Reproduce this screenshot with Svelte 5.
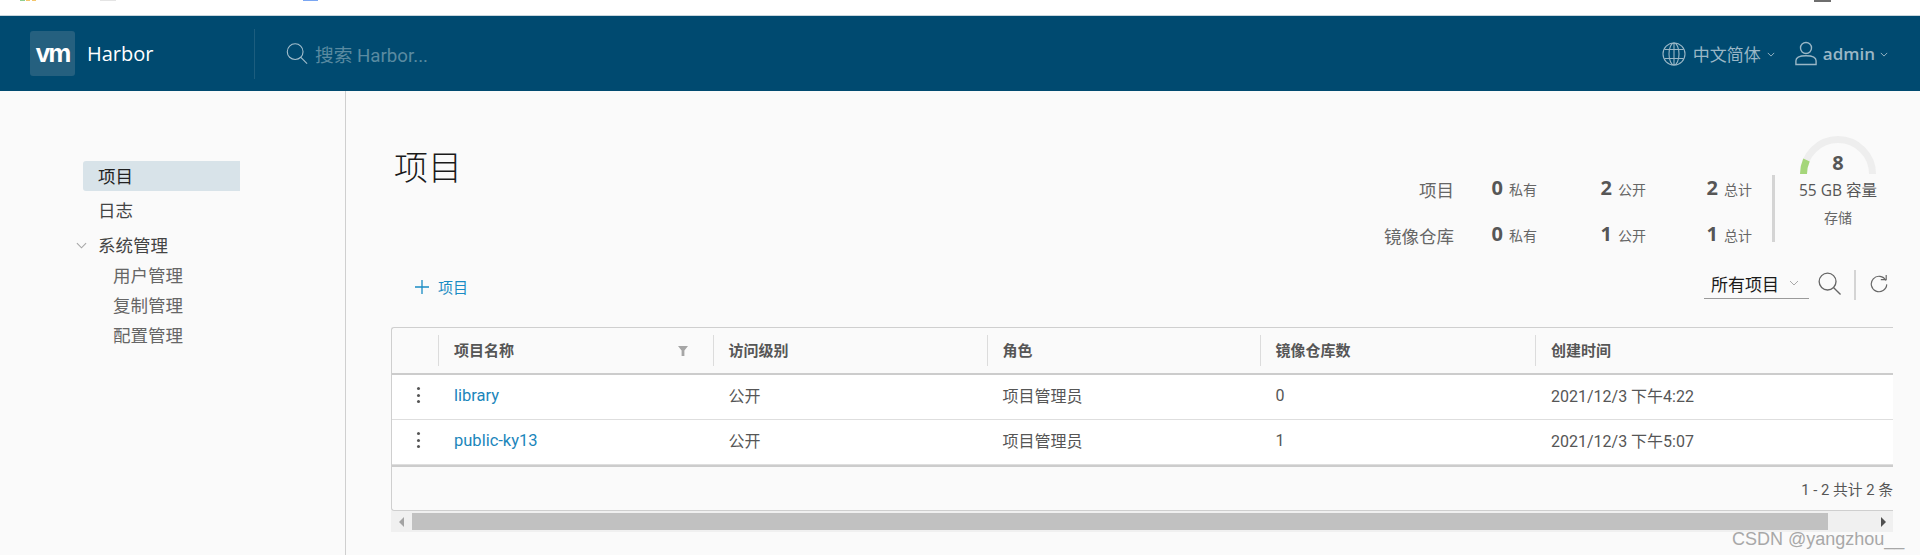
<script lang="ts">
	const rows = [
		{ name: 'library', access: '公开', role: '项目管理员', repos: 0, created: '2021/12/3 下午4:22' },
		{ name: 'public-ky13', access: '公开', role: '项目管理员', repos: 1, created: '2021/12/3 下午5:07' }
	];
	const columns = ['项目名称', '访问级别', '角色', '镜像仓库数', '创建时间'];
	const stats = [
		{ label: '项目', priv: 0, pub: 2, total: 2 },
		{ label: '镜像仓库', priv: 0, pub: 1, total: 1 }
	];
</script>

<div class="page">
	<div class="browser-strip">
		<span class="fav fav-a"></span>
		<span class="fav fav-b"></span>
		<span class="fav fav-c"></span>
		<span class="fav fav-d"></span>
	</div>

	<header class="topbar">
		<div class="brand">
			<span class="logo">vm</span>
			<span class="brand-name">Harbor</span>
		</div>
		<div class="global-search">
			<svg class="search-icon" viewBox="0 0 24 24" fill="none" stroke="currentColor" stroke-width="1.2">
				<circle cx="10" cy="10" r="8.6" />
				<path d="M16.2 16.2 L23 23" />
			</svg>
			<span>搜索 Harbor...</span>
		</div>
		<div class="top-right">
			<svg class="globe" viewBox="0 0 24 24" fill="none" stroke="currentColor" stroke-width="1.1">
				<circle cx="12" cy="12" r="11" />
				<ellipse cx="12" cy="12" rx="5" ry="11" />
				<path d="M12 1 V23 M2.4 7.5 H21.6 M2.4 16.5 H21.6" />
			</svg>
			<span class="lang">中文简体</span>
			<svg class="caret" viewBox="0 0 10 6" fill="none" stroke="currentColor" stroke-width="1.2"><path d="M1 1 L5 5 L9 1" /></svg>
			<svg class="user" viewBox="0 0 24 26" fill="none" stroke="currentColor" stroke-width="1.5">
				<circle cx="12" cy="7" r="6" />
				<path d="M1 25 V21 C1 17.5 5 15.5 12 15.5 C19 15.5 23 17.5 23 21 V25 Z" />
			</svg>
			<span class="uname">admin</span>
			<svg class="caret" viewBox="0 0 10 6" fill="none" stroke="currentColor" stroke-width="1.2"><path d="M1 1 L5 5 L9 1" /></svg>
		</div>
	</header>

	<div class="body">
		<nav class="sidebar">
			<div class="nav-item active">项目</div>
			<div class="nav-item">日志</div>
			<div class="nav-item group">
				<svg class="group-caret" viewBox="0 0 12 7" fill="none" stroke="currentColor" stroke-width="1.2"><path d="M1 1 L6 6 L11 1" /></svg>
				系统管理
			</div>
			<div class="nav-sub">用户管理</div>
			<div class="nav-sub">复制管理</div>
			<div class="nav-sub">配置管理</div>
		</nav>

		<main class="content">
			<div class="title-row">
				<h1>项目</h1>
				<div class="summary">
					<div class="stats">
						{#each stats as s}
							<div class="stat-row">
								<span class="stat-label">{s.label}</span>
								<span class="stat-cell c1"><b>{s.priv}</b><small>私有</small></span>
								<span class="stat-cell c2"><b>{s.pub}</b><small>公开</small></span>
								<span class="stat-cell c3"><b>{s.total}</b><small>总计</small></span>
							</div>
						{/each}
					</div>
					<div class="storage">
						<div class="gauge">
							<svg viewBox="0 0 76 39" fill="none" stroke-width="7">
								<path d="M3.5 39 A34.5 34.5 0 0 1 72.5 39" stroke="#eeeeee" />
								<path d="M3.5 39 A34.5 34.5 0 0 1 6.5 25" stroke="#a5d67a" />
							</svg>
							<span class="gauge-num">8</span>
						</div>
						<div class="capacity">55 GB 容量</div>
						<div class="storage-label">存储</div>
					</div>
				</div>
			</div>

			<div class="toolbar">
				<button class="add-btn">
					<svg viewBox="0 0 14 14" fill="none" stroke="currentColor" stroke-width="1.3"><path d="M7 0 V14 M0 7 H14" /></svg>
					项目
				</button>
				<div class="tools">
					<div class="select">
						<span>所有项目</span>
						<svg viewBox="0 0 10 6" fill="none" stroke="#a9a9a9" stroke-width="1"><path d="M1 1 L5 5 L9 1" /></svg>
					</div>
					<svg class="tool-search" viewBox="0 0 24 24" fill="none" stroke="#666" stroke-width="1.4">
						<circle cx="10" cy="10" r="8.8" />
						<path d="M16.4 16.4 L23.5 23.5" />
					</svg>
					<span class="tool-sep"></span>
					<svg class="refresh" viewBox="0 0 20 20" fill="none" stroke="#666" stroke-width="1.3">
						<path d="M17.6 6.5 A8.6 8.6 0 1 0 18.6 11" />
						<path d="M12 5.6 H18 V0.6" />
					</svg>
				</div>
			</div>

			<div class="datagrid">
				<div class="grid-row head">
					<div class="cell action"></div>
					{#each columns as col, i}
						<div class="cell">
							<span>{col}</span>
							{#if i === 0}
								<svg class="filter" viewBox="0 0 10 10"><path d="M0 0 H10 L6.4 4.6 V10 H3.6 V4.6 Z" fill="#a6a6a6" /></svg>
							{/if}
						</div>
					{/each}
				</div>
				{#each rows as r}
					<div class="grid-row item">
						<div class="cell action">
							<span class="kebab"><i></i><i></i><i></i></span>
						</div>
						<div class="cell link">{r.name}</div>
						<div class="cell">{r.access}</div>
						<div class="cell">{r.role}</div>
						<div class="cell">{r.repos}</div>
						<div class="cell">{r.created}</div>
					</div>
				{/each}
				<div class="grid-foot">1 - 2 共计 2 条</div>
			</div>
			<div class="scrollbar">
				<span class="arrow left"></span>
				<span class="thumb"></span>
				<span class="arrow right"></span>
			</div>
		</main>
	</div>

	<div class="watermark">CSDN @yangzhou__</div>
</div>

<style>
	:global(body) {
		margin: 0;
		background: #fafafa;
	}

	.page {
		position: relative;
		width: 1920px;
		height: 555px;
		overflow: hidden;
		font-family: "Open Sans", "Noto Sans CJK SC", sans-serif;
		color: #565656;
		background: #fafafa;
	}

	.browser-strip {
		height: 16px;
		background: #fff;
		border-bottom: 1px solid #c8d6dd;
		box-sizing: border-box;
		position: relative;
	}

	.fav {
		position: absolute;
		top: 0;
		height: 1px;
	}

	.fav-a { left: 20px; width: 16px; background: linear-gradient(90deg, #8fcf8f 0 30%, #fff 30% 40%, #f4c56a 40% 65%, #fff 65% 75%, #f4c56a 75%); }
	.fav-b { left: 100px; width: 16px; background: #e4e4e4; }
	.fav-c { left: 303px; width: 15px; background: #7aa6f2; }
	.fav-d { left: 1814px; width: 17px; height: 2px; background: #6e6e6e; }

	.topbar {
		height: 75px;
		background: #004a70;
		display: flex;
		align-items: center;
	}

	.brand {
		width: 255px;
		height: 50px;
		padding-left: 30px;
		box-sizing: border-box;
		display: flex;
		align-items: center;
		gap: 12px;
		border-right: 1px solid #1c5d7e;
	}

	.logo {
		width: 45px;
		height: 45px;
		flex: none;
		border-radius: 3px;
		background: #25607f;
		color: #fff;
		display: flex;
		align-items: center;
		justify-content: center;
		font-family: "Liberation Sans", sans-serif;
		font-weight: 700;
		font-size: 26px;
		letter-spacing: -2px;
	}

	.brand-name {
		color: #fff;
		font-size: 20px;
	}

	.global-search {
		margin-left: 31px;
		display: flex;
		align-items: center;
		gap: 7px;
		color: #5a8aa1;
		font-family: Roboto, "Noto Sans CJK SC", sans-serif;
		font-size: 18.7px;
	}

	.search-icon {
		width: 22px;
		height: 23px;
		color: #a4bfcd;
	}

	.top-right {
		margin-left: auto;
		padding-right: 32px;
		display: flex;
		align-items: center;
		color: #9ab7c6;
	}

	.globe {
		width: 24px;
		height: 24px;
		margin-right: 7px;
	}

	.lang {
		font-size: 17px;
		margin-right: 6px;
	}

	.caret {
		width: 8px;
		height: 5px;
		margin-top: 2px;
	}

	.user {
		width: 22px;
		height: 25px;
		margin-left: 20px;
		margin-right: 6px;
	}

	.uname {
		font-size: 17px;
		font-weight: 600;
		margin-right: 5px;
	}

	.body {
		display: flex;
		height: 464px;
	}

	.sidebar {
		width: 346px;
		box-sizing: border-box;
		border-right: 1px solid #cfcfcf;
		padding: 70px 0 0 83px;
	}

	.nav-item {
		width: 157px;
		height: 30px;
		line-height: 30px;
		margin-bottom: 5px;
		padding-left: 15px;
		box-sizing: border-box;
		font-size: 17.5px;
		color: #444;
		position: relative;
	}

	.nav-item.active {
		background: #d8e3e9;
		border-radius: 3px 0 0 3px;
		color: #222;
		margin-bottom: 4px;
	}

	.nav-item.group {
		margin-bottom: 0;
	}

	.group-caret {
		position: absolute;
		left: -7px;
		top: 12px;
		width: 11px;
		height: 7px;
		color: #a6a6a6;
	}

	.nav-sub {
		height: 30px;
		line-height: 30px;
		padding-left: 30px;
		font-size: 17.5px;
		color: #666;
	}

	.content {
		flex: 1;
		min-width: 0;
		padding: 0 27px 0 45px;
	}

	.title-row {
		display: flex;
		justify-content: space-between;
		height: 167px;
	}

	h1 {
		margin: 0;
		padding: 51px 0 0 3px;
		font-size: 34px;
		font-weight: 300;
		line-height: 50px;
		color: #1a1a1a;
	}

	.summary {
		display: flex;
		align-items: flex-start;
		margin-right: 5px;
	}

	.stats {
		margin-top: 84px;
		height: 67px;
		box-sizing: border-box;
		padding: 8px 20px 0 0;
		border-right: 3px solid #d4d4d4;
		display: flex;
		flex-direction: column;
		gap: 34px;
	}

	.stat-row {
		display: flex;
		height: 12px;
		align-items: center;
	}

	.stat-label {
		width: 100px;
		text-align: right;
		font-size: 17.5px;
		color: #666;
	}

	.stat-cell {
		display: flex;
		justify-content: flex-end;
		align-items: baseline;
		gap: 6px;
		margin-top: -3px;
	}

	.stat-cell.c1 { width: 83px; }
	.stat-cell.c2 { width: 109px; }
	.stat-cell.c3 { width: 106px; }

	.stat-cell b {
		font-size: 20px;
		font-weight: 700;
		color: #565656;
	}

	.stat-cell small {
		font-size: 14px;
		color: #666;
	}

	.storage {
		width: 100px;
		margin-top: 44px;
		margin-left: 13px;
		text-align: center;
	}

	.gauge {
		position: relative;
		width: 76px;
		height: 39px;
		margin: 0 auto;
	}

	.gauge svg {
		display: block;
		width: 76px;
		height: 39px;
	}

	.gauge-num {
		position: absolute;
		left: 0;
		right: 0;
		top: 15px;
		font-size: 20px;
		font-weight: 700;
		line-height: 26px;
		color: #565656;
	}

	.capacity {
		font-size: 15.5px;
		line-height: 22px;
		margin-top: 5px;
		white-space: nowrap;
	}

	.storage-label {
		font-size: 14px;
		line-height: 20px;
		margin-top: 7px;
		color: #666;
	}

	.toolbar {
		height: 69px;
		position: relative;
		display: flex;
		justify-content: space-between;
		align-items: flex-start;
	}

	.add-btn {
		border: 0;
		background: none;
		padding: 0;
		margin: 18px 0 0 24px;
		display: flex;
		align-items: center;
		gap: 9px;
		font: inherit;
		font-size: 15px;
		color: #1a8cc4;
	}

	.add-btn svg {
		width: 14px;
		height: 14px;
	}

	.tools {
		display: flex;
		align-items: center;
		margin-top: 9px;
		margin-right: 5px;
	}

	.select {
		width: 105px;
		height: 30px;
		box-sizing: border-box;
		border-bottom: 1px solid #9a9a9a;
		padding-left: 7px;
		display: flex;
		align-items: center;
		gap: 10px;
		font-size: 17px;
		color: #1a1a1a;
	}

	.select svg {
		width: 10px;
		height: 6px;
	}

	.tool-search {
		width: 23px;
		height: 23px;
		margin-left: 9px;
	}

	.tool-sep {
		width: 2px;
		height: 30px;
		background: #d4d4d4;
		margin-left: 13px;
		margin-top: 3px;
	}

	.refresh {
		width: 18px;
		height: 19px;
		margin-left: 14px;
	}

	.datagrid {
		border: 1px solid #cfcfcf;
		border-right: 0;
		border-radius: 3px 0 0 3px;
		height: 184px;
		box-sizing: border-box;
		display: flex;
		flex-direction: column;
		overflow: hidden;
	}

	.grid-row {
		display: grid;
		grid-template-columns: 46px 274.5px 274px 273px 275.5px 1fr;
		font-size: 16px;
	}

	.grid-row.head {
		height: 45px;
		border-bottom: 2px solid #cccccc;
		align-items: center;
		font-size: 15px;
		font-weight: 700;
		color: #565656;
	}

	.head .cell {
		height: 31px;
		border-left: 1px solid #dcdcdc;
		display: flex;
		align-items: center;
		justify-content: space-between;
		padding: 0 25px 0 15px;
	}

	.head .cell span {
		margin-bottom: 3px;
	}

	.head .cell.action {
		border-left: 0;
	}

	.filter {
		width: 10px;
		height: 10px;
	}

	.grid-row.item {
		height: 45px;
		background: #fff;
		border-bottom: 1px solid #dedede;
		box-sizing: border-box;
		align-items: center;
		color: #565656;
	}

	.grid-row.item + .grid-foot {
		border-top: 2px solid #cccccc;
	}

	.item .cell {
		padding: 0 0 4px 16px;
		font-family: Roboto, "Noto Sans CJK SC", sans-serif;
	}

	.item .cell.action {
		padding-left: 0;
		display: flex;
		justify-content: center;
	}

	.link {
		color: #1b86bb;
		font-size: 16.5px;
	}

	.kebab {
		display: flex;
		flex-direction: column;
		gap: 3.5px;
		margin-left: 6px;
	}

	.kebab i {
		width: 3px;
		height: 3px;
		border-radius: 50%;
		background: #555;
	}

	.grid-foot {
		flex: 1;
		display: flex;
		align-items: center;
		justify-content: flex-end;
		font-family: Roboto, "Noto Sans CJK SC", sans-serif;
		font-size: 14.8px;
		white-space: nowrap;
	}

	.scrollbar {
		height: 21px;
		background: #f0f0f0;
		display: flex;
		align-items: center;
	}

	.thumb {
		flex: 1;
		height: 17px;
		background: #c1c1c1;
	}

	.arrow {
		width: 21px;
		display: flex;
		justify-content: center;
	}

	.arrow.right {
		width: 65px;
		justify-content: flex-end;
		padding-right: 7px;
		box-sizing: border-box;
	}

	.arrow::before {
		content: '';
		border-top: 5px solid transparent;
		border-bottom: 5px solid transparent;
	}

	.arrow.left::before {
		border-right: 5px solid #a3a3a3;
	}

	.arrow.right::before {
		border-left: 5px solid #505050;
	}

	.watermark {
		position: absolute;
		left: 1732px;
		top: 527px;
		font-family: "Liberation Sans", sans-serif;
		font-size: 18px;
		line-height: 24px;
		color: #a8a8a8;
		white-space: nowrap;
	}
</style>
